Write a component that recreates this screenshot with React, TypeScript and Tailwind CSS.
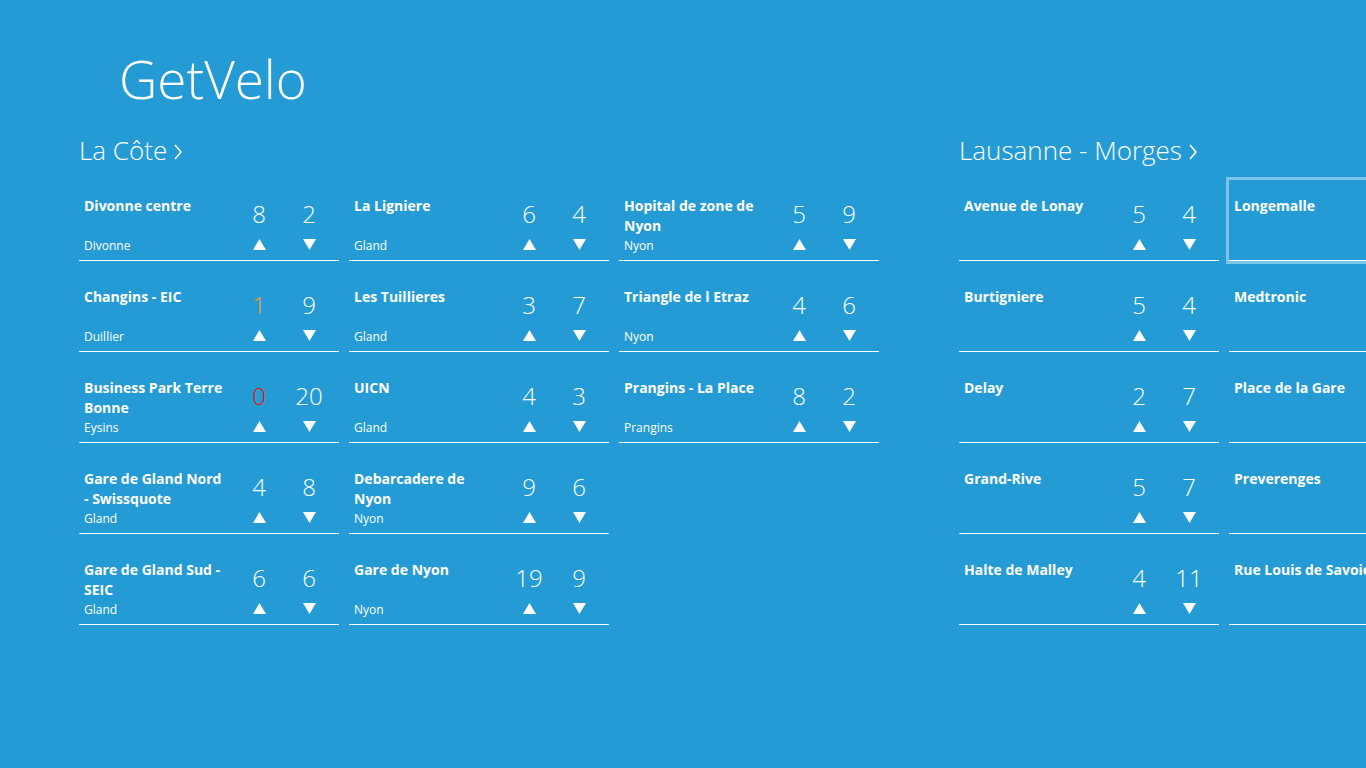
type Station = {
  name: string;
  city: string;
  bikes?: number;
  docks?: number;
  bikesColor?: string;
  focused?: boolean;
};

const laCote: Station[] = [
  { name: "Divonne centre", city: "Divonne", bikes: 8, docks: 2 },
  { name: "Changins - EIC", city: "Duillier", bikes: 1, docks: 9, bikesColor: "text-[#E8A12A]" },
  { name: "Business Park Terre\nBonne", city: "Eysins", bikes: 0, docks: 20, bikesColor: "text-[#E51400]" },
  { name: "Gare de Gland Nord\n- Swissquote", city: "Gland", bikes: 4, docks: 8 },
  { name: "Gare de Gland Sud -\nSEIC", city: "Gland", bikes: 6, docks: 6 },
  { name: "La Ligniere", city: "Gland", bikes: 6, docks: 4 },
  { name: "Les Tuillieres", city: "Gland", bikes: 3, docks: 7 },
  { name: "UICN", city: "Gland", bikes: 4, docks: 3 },
  { name: "Debarcadere de\nNyon", city: "Nyon", bikes: 9, docks: 6 },
  { name: "Gare de Nyon", city: "Nyon", bikes: 19, docks: 9 },
  { name: "Hopital de zone de\nNyon", city: "Nyon", bikes: 5, docks: 9 },
  { name: "Triangle de l Etraz", city: "Nyon", bikes: 4, docks: 6 },
  { name: "Prangins - La Place", city: "Prangins", bikes: 8, docks: 2 },
];

// second column runs past the window edge, so only the names show
const lausanne: Station[] = [
  { name: "Avenue de Lonay", city: "", bikes: 5, docks: 4 },
  { name: "Burtigniere", city: "", bikes: 5, docks: 4 },
  { name: "Delay", city: "", bikes: 2, docks: 7 },
  { name: "Grand-Rive", city: "", bikes: 5, docks: 7 },
  { name: "Halte de Malley", city: "", bikes: 4, docks: 11 },
  { name: "Longemalle", city: "", focused: true },
  { name: "Medtronic", city: "" },
  { name: "Place de la Gare", city: "" },
  { name: "Preverenges", city: "" },
  { name: "Rue Louis de Savoie", city: "" },
];

function Arrow({ down }: { down?: boolean }) {
  return (
    <svg width="13" height="11" viewBox="0 0 13 11" className="mt-[11px]">
      {down ? <polygon points="0,0 13,0 6.5,11" fill="white" /> : <polygon points="6.5,0 13,11 0,11" fill="white" />}
    </svg>
  );
}

function Tile({ s }: { s: Station }) {
  return (
    <div
      className={`flex h-[81px] w-[260px] border-b border-white text-white ${
        s.focused ? "ring-[3px] ring-[#7cc4e8]" : ""
      }`}
    >
      <div className="flex flex-1 flex-col justify-between whitespace-nowrap pb-[7px] pl-[5px] pt-[16px]">
        <div className="whitespace-pre-line text-[14px] font-bold leading-[20px]">{s.name}</div>
        <div className="text-[12px] leading-[14px]">{s.city}</div>
      </div>
      {s.bikes !== undefined && (
        <>
          <div className="flex w-[50px] flex-col items-center pt-[20px]">
            <div className={`text-[24px] font-light leading-[28px] ${s.bikesColor ?? ""}`}>{s.bikes}</div>
            <Arrow />
          </div>
          <div className="mr-[5px] flex w-[50px] flex-col items-center pt-[20px]">
            <div className="text-[24px] font-light leading-[28px]">{s.docks}</div>
            <Arrow down />
          </div>
        </>
      )}
    </div>
  );
}

function Group({ title, stations }: { title: string; stations: Station[] }) {
  return (
    <section className="shrink-0">
      <h2 className="flex h-[32px] items-center gap-[7px] text-[26px] font-light leading-[32px] text-white">
        <span>{title}</span>
        <svg width="8" height="16" viewBox="0 0 8 16" className="mt-[3px]">
          <polyline points="1,1 7,8 1,15" fill="none" stroke="white" strokeWidth="1.6" />
        </svg>
      </h2>
      <div className="mt-[14px] grid auto-cols-[260px] grid-flow-col grid-rows-[repeat(5,81px)] gap-[10px]">
        {stations.map((s) => (
          <Tile key={s.name} s={s} />
        ))}
      </div>
    </section>
  );
}

export default function App() {
  return (
    <div className="h-[768px] w-[1366px] overflow-hidden bg-[#249BD4] font-['Open_Sans',sans-serif] text-white">
      <h1 className="ml-[119px] mt-[47px] text-[53px] font-light leading-[64px]">GetVelo</h1>
      <div className="ml-[79px] mt-[23px] flex gap-[80px]">
        <Group title="La Côte" stations={laCote} />
        <Group title="Lausanne - Morges" stations={lausanne} />
      </div>
    </div>
  );
}
